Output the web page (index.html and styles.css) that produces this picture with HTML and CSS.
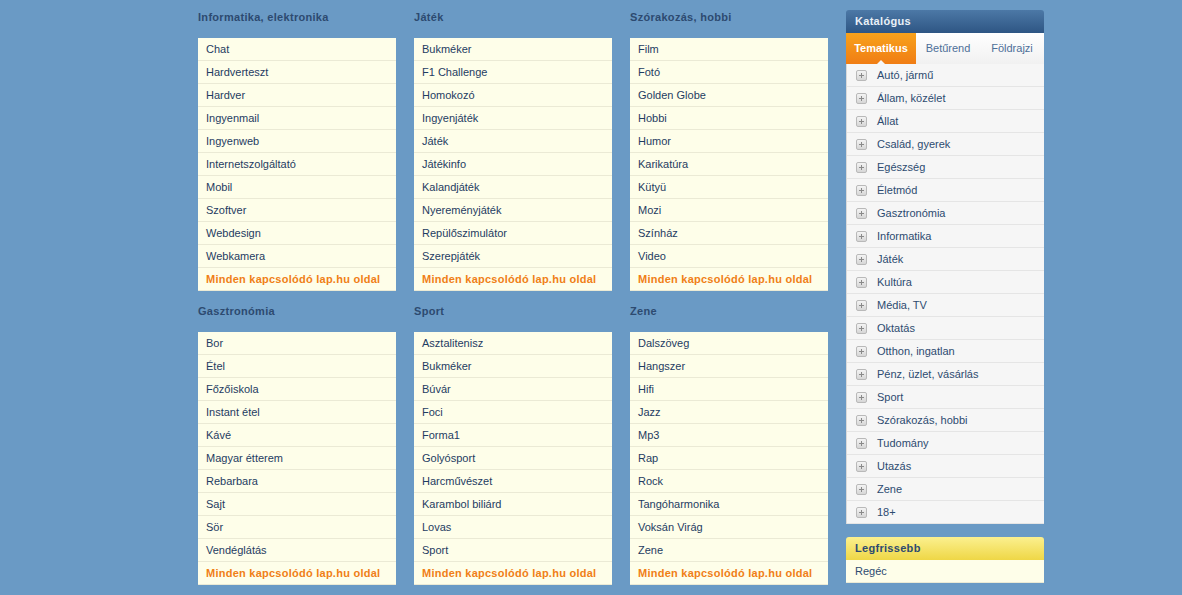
FILE: index.html
```html
<!DOCTYPE html>
<html lang="hu">
<head>
<meta charset="UTF-8">
<title>lap.hu</title>
<link rel="stylesheet" href="styles.css">
</head>
<body>
<div class="page">
  <div class="topics">
    <div class="topic">
      <h3 class="topic-title">Informatika, elektronika</h3>
      <ul class="links">
        <li><a href="#">Chat</a></li>
        <li><a href="#">Hardverteszt</a></li>
        <li><a href="#">Hardver</a></li>
        <li><a href="#">Ingyenmail</a></li>
        <li><a href="#">Ingyenweb</a></li>
        <li><a href="#">Internetszolgáltató</a></li>
        <li><a href="#">Mobil</a></li>
        <li><a href="#">Szoftver</a></li>
        <li><a href="#">Webdesign</a></li>
        <li><a href="#">Webkamera</a></li>
        <li class="more"><a href="#">Minden kapcsolódó lap.hu oldal</a></li>
      </ul>
    </div>
    <div class="topic">
      <h3 class="topic-title">Játék</h3>
      <ul class="links">
        <li><a href="#">Bukméker</a></li>
        <li><a href="#">F1 Challenge</a></li>
        <li><a href="#">Homokozó</a></li>
        <li><a href="#">Ingyenjáték</a></li>
        <li><a href="#">Játék</a></li>
        <li><a href="#">Játékinfo</a></li>
        <li><a href="#">Kalandjáték</a></li>
        <li><a href="#">Nyereményjáték</a></li>
        <li><a href="#">Repülőszimulátor</a></li>
        <li><a href="#">Szerepjáték</a></li>
        <li class="more"><a href="#">Minden kapcsolódó lap.hu oldal</a></li>
      </ul>
    </div>
    <div class="topic">
      <h3 class="topic-title">Szórakozás, hobbi</h3>
      <ul class="links">
        <li><a href="#">Film</a></li>
        <li><a href="#">Fotó</a></li>
        <li><a href="#">Golden Globe</a></li>
        <li><a href="#">Hobbi</a></li>
        <li><a href="#">Humor</a></li>
        <li><a href="#">Karikatúra</a></li>
        <li><a href="#">Kütyü</a></li>
        <li><a href="#">Mozi</a></li>
        <li><a href="#">Színház</a></li>
        <li><a href="#">Video</a></li>
        <li class="more"><a href="#">Minden kapcsolódó lap.hu oldal</a></li>
      </ul>
    </div>
    <div class="topic">
      <h3 class="topic-title">Gasztronómia</h3>
      <ul class="links">
        <li><a href="#">Bor</a></li>
        <li><a href="#">Étel</a></li>
        <li><a href="#">Főzőiskola</a></li>
        <li><a href="#">Instant étel</a></li>
        <li><a href="#">Kávé</a></li>
        <li><a href="#">Magyar étterem</a></li>
        <li><a href="#">Rebarbara</a></li>
        <li><a href="#">Sajt</a></li>
        <li><a href="#">Sör</a></li>
        <li><a href="#">Vendéglátás</a></li>
        <li class="more"><a href="#">Minden kapcsolódó lap.hu oldal</a></li>
      </ul>
    </div>
    <div class="topic">
      <h3 class="topic-title">Sport</h3>
      <ul class="links">
        <li><a href="#">Asztalitenisz</a></li>
        <li><a href="#">Bukméker</a></li>
        <li><a href="#">Búvár</a></li>
        <li><a href="#">Foci</a></li>
        <li><a href="#">Forma1</a></li>
        <li><a href="#">Golyósport</a></li>
        <li><a href="#">Harcművészet</a></li>
        <li><a href="#">Karambol biliárd</a></li>
        <li><a href="#">Lovas</a></li>
        <li><a href="#">Sport</a></li>
        <li class="more"><a href="#">Minden kapcsolódó lap.hu oldal</a></li>
      </ul>
    </div>
    <div class="topic">
      <h3 class="topic-title">Zene</h3>
      <ul class="links">
        <li><a href="#">Dalszöveg</a></li>
        <li><a href="#">Hangszer</a></li>
        <li><a href="#">Hifi</a></li>
        <li><a href="#">Jazz</a></li>
        <li><a href="#">Mp3</a></li>
        <li><a href="#">Rap</a></li>
        <li><a href="#">Rock</a></li>
        <li><a href="#">Tangóharmonika</a></li>
        <li><a href="#">Voksán Virág</a></li>
        <li><a href="#">Zene</a></li>
        <li class="more"><a href="#">Minden kapcsolódó lap.hu oldal</a></li>
      </ul>
    </div>
  </div>

  <div class="sidebar">
    <div class="box catalog">
      <div class="box-head">Katalógus</div>
      <div class="tabs">
        <a class="tab active" href="#">Tematikus</a>
        <a class="tab" href="#">Betűrend</a>
        <a class="tab" href="#">Földrajzi</a>
      </div>
      <ul class="cats">
        <li><span class="plus"></span><a href="#">Autó, jármű</a></li>
        <li><span class="plus"></span><a href="#">Állam, közélet</a></li>
        <li><span class="plus"></span><a href="#">Állat</a></li>
        <li><span class="plus"></span><a href="#">Család, gyerek</a></li>
        <li><span class="plus"></span><a href="#">Egészség</a></li>
        <li><span class="plus"></span><a href="#">Életmód</a></li>
        <li><span class="plus"></span><a href="#">Gasztronómia</a></li>
        <li><span class="plus"></span><a href="#">Informatika</a></li>
        <li><span class="plus"></span><a href="#">Játék</a></li>
        <li><span class="plus"></span><a href="#">Kultúra</a></li>
        <li><span class="plus"></span><a href="#">Média, TV</a></li>
        <li><span class="plus"></span><a href="#">Oktatás</a></li>
        <li><span class="plus"></span><a href="#">Otthon, ingatlan</a></li>
        <li><span class="plus"></span><a href="#">Pénz, üzlet, vásárlás</a></li>
        <li><span class="plus"></span><a href="#">Sport</a></li>
        <li><span class="plus"></span><a href="#">Szórakozás, hobbi</a></li>
        <li><span class="plus"></span><a href="#">Tudomány</a></li>
        <li><span class="plus"></span><a href="#">Utazás</a></li>
        <li><span class="plus"></span><a href="#">Zene</a></li>
        <li><span class="plus"></span><a href="#">18+</a></li>
      </ul>
    </div>

    <div class="box latest">
      <div class="box-head">Legfrissebb</div>
      <ul class="links">
        <li><a href="#">Regéc</a></li>
      </ul>
    </div>
  </div>
</div>
</body>
</html>
```

FILE: styles.css
```css
/* page */
body {
  margin: 0;
  background: #6a9ac5;
  font-family: "Liberation Sans", Arial, sans-serif;
  font-size: 11px;
}
a {
  text-decoration: none;
}
ul {
  list-style: none;
  margin: 0;
  padding: 0;
}
.page {
  display: flex;
  gap: 18px;
  padding: 10px 0 0 198px;
}

/* topic columns */
.topics {
  display: grid;
  grid-template-columns: repeat(3, 198px);
  column-gap: 18px;
  row-gap: 13px;
  align-items: start;
}
.topic-title {
  margin: 0 0 14px;
  font-size: 11px;
  line-height: 14px;
  font-weight: bold;
  letter-spacing: 0.3px;
  color: #2d4a70;
}
.links {
  background: #fefee9;
}
.links li {
  height: 22px;
  line-height: 22px;
  padding: 0 8px;
  border-bottom: 1px solid #ebead5;
}
.links a {
  color: #1f3c62;
}
.links .more a {
  color: #f07f17;
  font-weight: bold;
  letter-spacing: 0.25px;
}

/* sidebar */
.sidebar {
  width: 198px;
  display: flex;
  flex-direction: column;
  gap: 13px;
}
.box-head {
  height: 23px;
  line-height: 23px;
  padding: 0 9px;
  font-weight: bold;
  letter-spacing: 0.3px;
  border-radius: 3px 3px 0 0;
}
.catalog .box-head {
  color: #e9f0f7;
  background: linear-gradient(#4c78a6, #2e5684);
}
.tabs {
  display: flex;
  height: 31px;
  background: linear-gradient(#ffffff, #f1f1f1);
}
.tab {
  position: relative;
  width: 64px;
  text-align: center;
  line-height: 31px;
  color: #4d6f98;
}
.tab:last-child {
  flex: 1;
}
.tab.active {
  width: 70px;
  color: #fff;
  font-weight: bold;
  background: linear-gradient(#f8a21c, #f07d14);
}
.tab.active::after {
  content: "";
  position: absolute;
  left: 50%;
  bottom: 0;
  margin-left: -4px;
  border: 4px solid transparent;
  border-bottom-color: #f6f6f6;
  border-top: 0;
}
.cats {
  background: #f6f6f6;
  border-left: 1px solid #d9d9d9;
}
.cats li {
  display: flex;
  align-items: center;
  height: 22px;
  padding: 0 0 0 9px;
  border-bottom: 1px solid #e5e5e5;
}
.cats a {
  color: #2d4b70;
}
.plus {
  position: relative;
  width: 9px;
  height: 9px;
  margin-right: 10px;
  border: 1px solid #b9b9b9;
  border-radius: 2px;
  background: linear-gradient(#f4f4f4, #d6d6d6);
}
.plus::before,
.plus::after {
  content: "";
  position: absolute;
  background: #8a8a8a;
}
.plus::before {
  left: 2px;
  top: 4px;
  width: 5px;
  height: 1px;
}
.plus::after {
  left: 4px;
  top: 2px;
  width: 1px;
  height: 5px;
}
.latest .box-head {
  color: #2d4a70;
  background: linear-gradient(#fbf08f, #efd746);
}
.latest .links li {
  padding: 0 9px;
}
.latest .links a {
  color: #2d4b70;
}
```
